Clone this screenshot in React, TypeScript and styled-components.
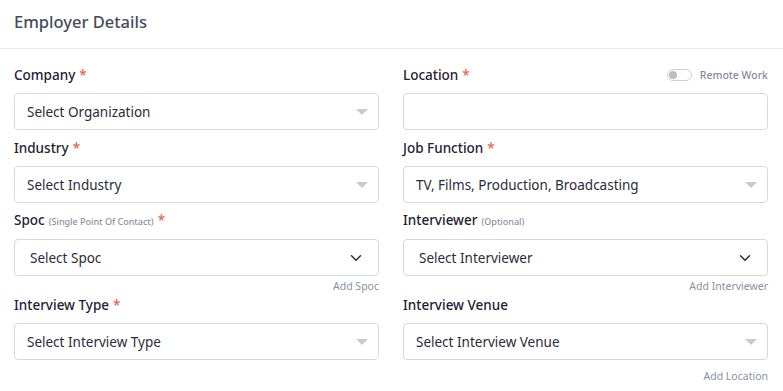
import React from "react";
import styled, { createGlobalStyle } from "styled-components";

const Global = createGlobalStyle`
  html, body { margin: 0; padding: 0; background: #ffffff; }
  body { font-family: "Noto Sans", "Open Sans", sans-serif; color: #1f2233; }
  * { box-sizing: border-box; }
`;

const Card = styled.div`
  width: 783px;
  background: #fff;
`;

const Header = styled.div`
  height: 49px;
  border-bottom: 1px solid #e8e9ee;
  padding: 0 14px 6px;
  display: flex;
  align-items: center;
`;

const Title = styled.h2`
  margin: 0;
  font-size: 16.5px;
  font-weight: 500;
  color: #474b5c;
`;

const Grid = styled.div`
  display: grid;
  grid-template-columns: 365px 365px;
  column-gap: 24px;
  padding: 16px 16px 0 14px;
`;

const Field = styled.div`
  display: flex;
  flex-direction: column;
  margin-bottom: 8px;
`;

const LabelRow = styled.div`
  display: flex;
  align-items: center;
  justify-content: space-between;
  height: 20px;
  margin-bottom: 8px;
`;

const Label = styled.label`
  font-size: 13.5px;
  font-weight: 500;
  color: #1f2233;
  line-height: 20px;
  white-space: nowrap;
`;

const Hint = styled.span`
  font-size: 9px;
  color: #8b8fa0;
  font-weight: 500;
  margin-left: 4px;
`;

const Star = styled.span`
  color: #f0604d;
  margin-left: 4px;
`;

const Box = styled.div<{ $indent?: number }>`
  height: 37px;
  border: 1px solid #d6d8de;
  border-radius: 4px;
  display: flex;
  align-items: center;
  justify-content: space-between;
  padding: 0 10px 0 ${(p) => p.$indent ?? 12}px;
  font-size: 13.5px;
  color: #2a2c3b;
  background: #fff;
`;

const Caret = styled.span`
  width: 0;
  height: 0;
  border-left: 6px solid transparent;
  border-right: 6px solid transparent;
  border-top: 6px solid #c9cacf;
`;

const ChevronWrap = styled.span`
  display: flex;
  margin-right: 6px;
`;

const Helper = styled.div<{ $gap?: number }>`
  text-align: right;
  font-size: 10.5px;
  color: #8b8fa0;
  line-height: 14px;
  margin-top: ${(p) => p.$gap ?? 3}px;
  margin-bottom: -6px;
`;

const Toggle = styled.div`
  display: flex;
  align-items: center;
  gap: 8px;
  font-size: 10.5px;
  color: #868a9b;
  font-weight: 500;
`;

const Switch = styled.span`
  width: 25px;
  height: 12px;
  border: 1px solid #cfd0d5;
  border-radius: 7px;
  position: relative;
  &::after {
    content: "";
    position: absolute;
    left: 1px;
    top: 1px;
    width: 8px;
    height: 8px;
    border-radius: 50%;
    background: #bdbdc1;
  }
`;

const Chevron = () => (
  <ChevronWrap>
    <svg width="12" height="8" viewBox="0 0 12 8" fill="none" stroke="#2a2c3b" strokeWidth="1.5" strokeLinecap="round" strokeLinejoin="round">
      <path d="M1.5 1.8L6 6.2l4.5-4.4" />
    </svg>
  </ChevronWrap>
);

type SelectProps = { text: string; chevron?: boolean };
const Select = ({ text, chevron }: SelectProps) => (
  <Box $indent={chevron ? 15 : 12}>
    <span>{text}</span>
    {chevron ? <Chevron /> : <Caret />}
  </Box>
);

export default function App() {
  return (
    <Card>
      <Global />
      <Header>
        <Title>Employer Details</Title>
      </Header>
      <Grid>
        <Field>
          <LabelRow>
            <Label>Company<Star>*</Star></Label>
          </LabelRow>
          <Select text="Select Organization" />
        </Field>
        <Field>
          <LabelRow>
            <Label>Location<Star>*</Star></Label>
            <Toggle>
              <Switch />
              Remote Work
            </Toggle>
          </LabelRow>
          <Box />
        </Field>
        <Field>
          <LabelRow>
            <Label>Industry<Star>*</Star></Label>
          </LabelRow>
          <Select text="Select Industry" />
        </Field>
        <Field>
          <LabelRow>
            <Label>Job Function<Star>*</Star></Label>
          </LabelRow>
          <Select text="TV, Films, Production, Broadcasting" />
        </Field>
        <Field>
          <LabelRow>
            <Label>Spoc<Hint>(Single Point Of Contact)</Hint><Star>*</Star></Label>
          </LabelRow>
          <Select text="Select Spoc" chevron />
          <Helper>Add Spoc</Helper>
        </Field>
        <Field>
          <LabelRow>
            <Label>Interviewer<Hint>(Optional)</Hint></Label>
          </LabelRow>
          <Select text="Select Interviewer" chevron />
          <Helper>Add Interviewer</Helper>
        </Field>
        <Field>
          <LabelRow>
            <Label>Interview Type<Star>*</Star></Label>
          </LabelRow>
          <Select text="Select Interview Type" />
        </Field>
        <Field>
          <LabelRow>
            <Label>Interview Venue</Label>
          </LabelRow>
          <Select text="Select Interview Venue" />
          <Helper $gap={9}>Add Location</Helper>
        </Field>
      </Grid>
    </Card>
  );
}
